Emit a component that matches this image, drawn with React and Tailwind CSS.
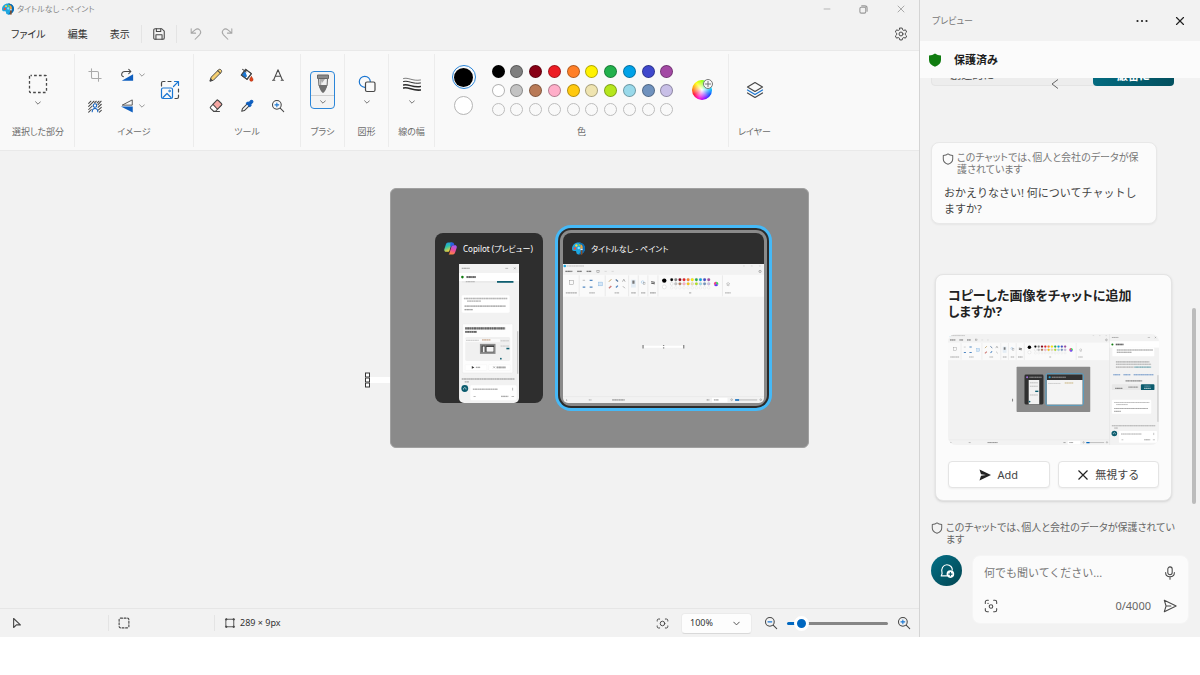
import { useState } from "react";
import { X, Minus } from "lucide-react";

const PALETTE = [
  ["bg-[#000000]", "#000000"],
  ["bg-[#7f7f7f]", "#7f7f7f"],
  ["bg-[#880015]", "#880015"],
  ["bg-[#ed1c24]", "#ed1c24"],
  ["bg-[#ff7f27]", "#ff7f27"],
  ["bg-[#fff200]", "#fff200"],
  ["bg-[#22b14c]", "#22b14c"],
  ["bg-[#00a2e8]", "#00a2e8"],
  ["bg-[#3f48cc]", "#3f48cc"],
  ["bg-[#a349a4]", "#a349a4"],
  ["bg-[#ffffff]", "#ffffff"],
  ["bg-[#c3c3c3]", "#c3c3c3"],
  ["bg-[#b97a57]", "#b97a57"],
  ["bg-[#ffaec9]", "#ffaec9"],
  ["bg-[#ffc90e]", "#ffc90e"],
  ["bg-[#efe4b0]", "#efe4b0"],
  ["bg-[#b5e61d]", "#b5e61d"],
  ["bg-[#99d9ea]", "#99d9ea"],
  ["bg-[#7092be]", "#7092be"],
  ["bg-[#c8bfe7]", "#c8bfe7"],
];
const EMPTY_SLOTS = Array.from({ length: 10 }, (_, i) => i);

/* ---------- icons ---------- */

function Icon({ size = "size-[14px]", box = "0 0 16 16", children }) {
  return (
    <svg
      viewBox={box}
      className={`${size} shrink-0`}
      fill="none"
      stroke="#484848"
      strokeWidth="1.2"
      strokeLinecap="round"
      strokeLinejoin="round"
      aria-hidden="true"
    >
      {children}
    </svg>
  );
}

function Chevron({ color = "#777" }) {
  return (
    <Icon size="size-[6px]" box="0 0 6 6">
      <path d="M.6 1.8 3 4.2 5.4 1.8" stroke={color} strokeWidth="1" />
    </Icon>
  );
}

function PaintLogo({ size = "size-3" }) {
  return (
    <svg viewBox="0 0 24 24" className={`${size} shrink-0`} aria-hidden="true">
      <path
        d="M12 1C5 1 0 6 0 12.500c0 3 2 4.500 4.500 4 2-.4 3.500.2 3.500 2.500 0 2.600 1.500 4 4 4 7 0 12-5 12-11.500C24 5.500 19 1 12 1Z"
        fill="#1ea7e0"
      />
      <path d="M12 1c7 0 12 4.500 12 10.500C24 18 19 23 12 23c6-5 8-14 0-22Z" fill="#0a6bb5" />
      <circle cx="5.500" cy="12" r="2.300" fill="#f04c3e" />
      <circle cx="8" cy="6.500" r="2.200" fill="#ffd23e" />
      <circle cx="14" cy="5.500" r="2" fill="#7bd34b" />
      <circle cx="12.500" cy="11" r="2.300" fill="#8be3ff" />
      <path d="M16.500 4.500c2.500 1 3.700 4 3.200 8h-4c-.6-3-.4-6 .8-8Z" fill="#f2a33c" />
      <path d="M15.700 12.500h4v2.500h-4z" fill="#e8e8e8" />
      <path d="M16 15h3.400l-.5 8.500h-2.300z" fill="#8a4a20" />
    </svg>
  );
}

function CopilotLogo() {
  return (
    <svg viewBox="0 0 24 24" className="size-[13px] shrink-0" aria-hidden="true">
      <defs>
        <linearGradient id="cpA" x1="0" y1="0" x2="0.4" y2="1">
          <stop offset="0" stopColor="#1c8df0" />
          <stop offset="0.5" stopColor="#2fc4a8" />
          <stop offset="1" stopColor="#f4d13a" />
        </linearGradient>
        <linearGradient id="cpB" x1="0.6" y1="0" x2="0.3" y2="1">
          <stop offset="0" stopColor="#a25bf5" />
          <stop offset="0.5" stopColor="#ea4c9c" />
          <stop offset="1" stopColor="#ff8a3c" />
        </linearGradient>
      </defs>
      <path
        d="M15.500 1H7.500C5 1 4 3 3.300 5L.7 13c-.8 3 .3 5 3.200 5h3.100c2 0 2.800-1 3.300-2.800l3-9.700C13.800 3.500 14 1.500 15.500 1Z"
        fill="url(#cpA)"
      />
      <path
        d="M8.500 23h8c2.500 0 3.500-2 4.200-4l2.600-8c.8-3-.3-5-3.200-5H17c-2 0-2.800 1-3.300 2.800l-3 9.700c-.5 2-.7 4-2.200 4.500Z"
        fill="url(#cpB)"
      />
      <path d="M12 1h3.500c2 0 2.700 1.300 3.100 2.800L19.200 6H17c-2 0-2.800 1-3.300 2.800L11.500 8Z" fill="#2b5fe0" />
    </svg>
  );
}

function SaveIcon() {
  return (
    <Icon>
      <path d="M2 3.500C2 2.700 2.700 2 3.500 2h7.700L14 4.800v7.700c0 .8-.7 1.500-1.500 1.500h-9c-.8 0-1.500-.7-1.500-1.500Z" />
      <path d="M5 2v3.200h5V2M4.500 14V8.800h7V14" />
    </Icon>
  );
}

function UndoIcon() {
  return (
    <Icon>
      <path d="M2.500 2v5h5M2.800 6.700 7 3.200c4-3 8.300 1.800 5.300 5.400L7 14" stroke="#a6a6a6" />
    </Icon>
  );
}

function RedoIcon() {
  return (
    <Icon>
      <path d="M13.500 2v5h-5M13.200 6.700 9 3.200C5 .2.700 5 3.700 8.600L9 14" stroke="#a6a6a6" />
    </Icon>
  );
}

function GearIcon() {
  return (
    <Icon box="0 0 20 20">
      <path
        d="M8.300 1.500h3.400l.6 2.500 1.600.9 2.500-.8 1.700 3-1.900 1.800v2.200l1.900 1.800-1.700 3-2.500-.8-1.600.9-.6 2.500H8.300L7.700 16l-1.600-.9-2.500.8-1.700-3 1.900-1.800V8.900L1.900 7.100l1.700-3 2.500.8L7.700 4Z"
        strokeWidth="1.400"
      />
      <circle cx="10" cy="10" r="2.800" strokeWidth="1.400" />
    </Icon>
  );
}

function CropIcon() {
  return (
    <Icon>
      <path d="M4 1v9.500c0 .8.700 1.500 1.500 1.500H15M1 4h9.500c.8 0 1.500.7 1.500 1.500V15" stroke="#aaa" />
    </Icon>
  );
}

function RotateIcon() {
  return (
    <Icon>
      <path d="M10 1.500 12.500 4 10 6.500M12.300 4H5.500C1.200 4 .8 9.500 4 10" />
      <path d="M15 7v7.500H2Z" fill="#0f5fbf" stroke="none" />
    </Icon>
  );
}

function FlipIcon() {
  return (
    <Icon>
      <path d="M14 1.500v5.500H3Z" strokeWidth="1" />
      <path d="M14.600 8.500v7L1 8.500Z" fill="#0f5fbf" stroke="none" />
    </Icon>
  );
}

function BackgroundIcon() {
  return (
    <Icon>
      <path
        d="M.8 5 3.300 2.500M.8 8.500l6-6M.8 12l4-4M.8 15l3-3M7.500 4.500l2-2M10.500 4.500l2-2M11.500 6.500l3.500-4M11.500 9.500 15.200 6M12 12.500l3.200-3M13 15l2.200-2"
        strokeWidth="1.200"
      />
      <circle cx="8" cy="7.500" r="2" stroke="#0f5fbf" fill="#f9f9f9" />
      <path d="M4.800 14.500c0-5 6.400-5 6.400 0" stroke="#0f5fbf" fill="#f9f9f9" />
    </Icon>
  );
}

function ResizeIcon() {
  return (
    <Icon size="size-5" box="0 0 20 20">
      <path d="M1.500 6V3c0-.8.700-1.500 1.500-1.500h2M8 1.500h3M18.500 9v3M18.500 15v2c0 .8-.7 1.500-1.500 1.500h-2" />
      <path d="M13.500 6.500 18.300 1.700M14.500 1.500h4v4" stroke="#1a76d2" />
      <rect x="1.500" y="8" width="11" height="10.500" rx="1.500" stroke="#1a76d2" />
      <path d="m3 17.500 4-4 4 4" stroke="#1a76d2" />
      <circle cx="9.500" cy="11" r=".8" stroke="#1a76d2" strokeWidth="1" />
    </Icon>
  );
}

function SelectIcon() {
  return (
    <Icon size="size-5" box="0 0 20 20">
      <rect x="1.500" y="1.500" width="17" height="17" rx="1" strokeDasharray="2.700 2.166" strokeDashoffset="1.300" strokeLinecap="butt" strokeWidth="1.300" />
    </Icon>
  );
}

function PencilIcon() {
  return (
    <Icon>
      <path d="m1.300 14.700 1-4L11 2c1.800-1.600 4.500 1 3 2.900L5.300 13.700Z" fill="#f7d070" strokeWidth="1.100" />
      <path d="m10 3 3 3" />
      <path d="m1.300 14.700.6-2.200 1.600 1.600Z" fill="#333" />
    </Icon>
  );
}

function BucketIcon() {
  return (
    <Icon>
      <path d="m6.500 1.500 6.500 5-5 6.500-6.500-5Z" fill="#fff" />
      <path d="m3.500 5.200 2-2.500L8 9.500l-2 2L1.500 8Z" fill="#1a76d2" stroke="none" />
      <path d="m6.500 1.500 6.500 5-5 6.500-6.500-5ZM3 1.500l4 3" />
      <path d="M13 9.800c1 1.400 1.900 2.300 1.900 3.500a1.900 1.900 0 0 1-3.800 0c0-1.200.9-2.100 1.900-3.500Z" fill="#e0431b" stroke="#a83010" strokeWidth=".6" />
    </Icon>
  );
}

function TextIcon() {
  return (
    <Icon>
      <path d="M3 13.800 8 2l5 11.800M4.900 9.500h6.200M1.800 14h2.600M11.600 14h2.600" />
    </Icon>
  );
}

function EraserIcon() {
  return (
    <Icon>
      <path d="m1.800 9 6.900-7.300c.5-.5 1.200-.5 1.700 0l3.800 3.500c.5.500.5 1.200 0 1.700L7.500 14H5.300L1.800 10.700c-.5-.5-.5-1.200 0-1.700Z" fill="#fff" />
      <path d="m4.500 6.200 5.200 5.500 4.500-4.800c.5-.5.500-1.200 0-1.700l-3.800-3.500c-.5-.5-1.200-.5-1.700 0Z" fill="#f7a8a4" />
      <path d="M5.300 14.300H12" />
    </Icon>
  );
}

function DropperIcon() {
  return (
    <Icon>
      <path d="m2 14 .8-3 5.700-5.700 2.200 2.200L5 13.200Z" />
      <path d="M9 3.500 10.500 4 12 2c1.500-1.500 3.700.5 2.200 2.200L12.200 6l.5 1.300-1.500 1.500-4-4Z" fill="#0f5fbf" stroke="#0f5fbf" />
    </Icon>
  );
}

function ZoomIcon({ plus = true }) {
  return (
    <Icon>
      <circle cx="6.700" cy="6.700" r="5" />
      <path d="m10.500 10.500 4 4" />
      <path d={plus ? "M4.500 6.700h4.400M6.700 4.500v4.400" : "M4.500 6.700h4.400"} stroke="#1a76d2" />
    </Icon>
  );
}

function BrushIcon() {
  return (
    <svg viewBox="0 0 14 20" className="h-5 w-[14px]" aria-hidden="true">
      <path d="M1.500 1h11v3.500h-11z" fill="#8a8a8a" stroke="#666" />
      <path d="M2.500 4.500h9l-.4 7-1.800 3H4.700l-1.800-3Z" fill="#eee" stroke="#666" />
      <path d="M3.500 5h2l-.3 6h-1.500zM5 5h4l-3 4z" fill="#aaa" />
      <path d="M3 11h8c0 3-2 7-4 8-2-1-4-5-4-8Z" fill="#6e6e6e" />
    </svg>
  );
}

function ShapesIcon() {
  return (
    <Icon size="size-[18px]" box="0 0 18 18">
      <circle cx="6.800" cy="6.800" r="5.500" stroke="#1a76d2" />
      <rect x="7.500" y="7" width="9.500" height="9.500" rx="1.500" fill="#fafafa" />
    </Icon>
  );
}

function LineWidthIcon() {
  return (
    <Icon size="size-[18px]" box="0 0 18 18">
      <g stroke="#2b2b2b">
        <path d="M.5 3.500c5-1.500 9 3 17 1.500" strokeWidth=".6" />
        <path d="M.5 6.500c5-1.500 9 3 17 1.500" strokeWidth="1" />
        <path d="M.5 10c5-1.500 9 3 17 1.500" strokeWidth="1.400" />
        <path d="M.5 13c5-1.500 9 3 17 2" strokeWidth="1.700" />
      </g>
    </Icon>
  );
}

function LayersIcon() {
  return (
    <Icon size="size-[18px]" box="0 0 18 18">
      <path d="M9 1.500 16.500 6 9 10.500 1.500 6Z" />
      <path d="M1.500 9 9 13.500 16.500 9" stroke="#1a76d2" />
      <path d="M1.500 12 9 16.500 16.500 12" />
    </Icon>
  );
}

function Shield({ filled }) {
  return filled ? (
    <svg viewBox="0 0 14 14" className="size-[14px] shrink-0" aria-hidden="true">
      <path d="M7 .5c1.800 1.300 3.600 1.800 6 2V7c0 3.200-2.200 5.500-6 6.700C3.200 12.500 1 10.200 1 7V2.500c2.400-.2 4.200-.7 6-2Z" fill="#107c10" />
    </svg>
  ) : (
    <Icon size="size-3" box="0 0 14 14">
      <path d="M7 1c1.600 1.200 3.300 1.700 5.500 2v4c0 3-2 5-5.500 6.200C3.500 12 1.500 10 1.500 7V3C3.700 2.700 5.400 2.200 7 1Z" stroke="#666" />
    </Icon>
  );
}

/* ---------- window thumbnails, drawn in screen units ---------- */

function Scrawl({ x, y, w, color = "#888", weight = 6 }) {
  return (
    <g stroke={color} strokeWidth={weight}>
      <path d={`M${x} ${y}h${w}`} opacity="0.35" />
      <path d={`M${x} ${y}h${w}`} strokeDasharray="7 3 10 3 5 3" opacity="0.4" />
    </g>
  );
}

function PaintScene() {
  return (
    <g>
      <rect width="919" height="637" fill="#f2f2f2" />
      <rect y="50" width="919" height="100" fill="#fafafa" />
      <circle cx="8" cy="9" r="6" fill="#1ea7e0" />
      <Scrawl x={17} y={9} w={79} color="#aaa" weight={5} />
      <Scrawl x={11} y={34} w={32} color="#333" />
      <Scrawl x={65} y={34} w={21} color="#333" />
      <Scrawl x={108} y={34} w={22} color="#333" />
      <rect x="155" y="29" width="10" height="10" fill="none" stroke="#777" strokeWidth="2" />
      <path d="M190 34h10M222 34h10M823 9h8M859 9h8M896 9h8" stroke="#ccc" strokeWidth="3" />
      <circle cx="901" cy="34" r="5" fill="none" stroke="#888" strokeWidth="3" />
      <path d="M74 52v96M193 52v96M300 52v96M344 52v96M388 52v96M434 52v96M729 52v96" stroke="#e2e2e2" strokeWidth="3" />
      <rect x="30" y="76" width="17" height="17" fill="none" stroke="#888" strokeWidth="2" />
      <path d="M90 75h11" stroke="#ccc" strokeWidth="5" />
      <path d="M122 75h13M90 106h12M122 106h13M242 108l9-9" stroke="#5087c2" strokeWidth="6" />
      <rect x="163" y="83" width="17" height="17" fill="#d5e6f6" stroke="#7fb2e0" strokeWidth="2" />
      <path d="M210 81l11-11" stroke="#b3904a" strokeWidth="4" />
      <path d="M241 71l11 9" stroke="#54759c" strokeWidth="5" />
      <path d="M272 81l6-11 6 11M274 102l9 9" stroke="#888" strokeWidth="3" fill="none" />
      <path d="M210 111l11-10" stroke="#cf7d7a" strokeWidth="7" />
      <rect x="311" y="72" width="22" height="36" fill="#e4edf5" />
      <path d="M317 76h10v14h-10z" fill="#777" />
      <circle cx="364" cy="83" r="6" fill="none" stroke="#7fb2e0" strokeWidth="2" />
      <rect x="367" y="85" width="8" height="8" fill="none" stroke="#999" strokeWidth="2" />
      <path d="M403 81l17 3M403 88l17 3" stroke="#444" strokeWidth="4" />
      <Scrawl x={13} y={132} w={50} color="#888" />
      <Scrawl x={120} y={132} w={26} color="#999" />
      <Scrawl x={236} y={132} w={21} color="#999" />
      <Scrawl x={312} y={132} w={21} color="#888" />
      <Scrawl x={357} y={132} w={19} color="#888" />
      <Scrawl x={398} y={132} w={26} color="#777" />
      <Scrawl x={577} y={132} w={10} color="#888" />
      <Scrawl x={741} y={132} w={26} color="#999" />
      <circle cx="463" cy="76" r="10" fill="#000" />
      <circle cx="463" cy="105" r="9" fill="#fff" stroke="#ccc" strokeWidth="2" />
      {PALETTE.map(([, hex], i) => (
        <circle key={hex} cx={497 + (i % 10) * 18.800} cy={i < 10 ? 72 : 91} r="6.500" fill={hex} stroke="#999" />
      ))}
      {EMPTY_SLOTS.map((i) => (
        <circle key={i} cx={497 + i * 18.800} cy="109" r="6" fill="#fafafa" stroke="#ccc" />
      ))}
      <path d="M700 81a10 10 0 0 1 9 15l-9-5Z" fill="#38d65a" />
      <path d="M709 96a10 10 0 0 1-18 0l9-5Z" fill="#6a3df0" />
      <path d="M691 96a10 10 0 0 1 9-15v10Z" fill="#f0438a" />
      <path d="M748 90l7-5 7 5-7 5ZM748 96l7 4 7-4" fill="none" stroke="#888" strokeWidth="2" />
      <path d="M0 608h919" stroke="#e2e2e2" strokeWidth="2" />
      <path d="M14 619l7 5-7 4Z" fill="#aaa" />
      <Scrawl x={118} y={623} w={12} color="#999" />
      <Scrawl x={225} y={623} w={57} color="#666" />
      <rect x="681" y="613" width="71" height="21" fill="#fff" />
      <Scrawl x={657} y={623} w={12} color="#777" />
      <Scrawl x={690} y={623} w={22} color="#777" />
      <circle cx="771" cy="622" r="4" fill="none" stroke="#777" strokeWidth="2" />
      <circle cx="904" cy="622" r="4" fill="none" stroke="#777" strokeWidth="2" />
      <path d="M787 623h101" stroke="#aaa" strokeWidth="4" />
      <path d="M787 623h18" stroke="#0067c0" strokeWidth="7" />
    </g>
  );
}

function CopilotFrame({ children }) {
  return (
    <g>
      <rect x="919" width="281" height="637" fill="#f2f2f2" />
      <path d="M919 0v637" stroke="#ddd" strokeWidth="3" />
      <Scrawl x={932} y={20} w={37} color="#888" />
      <path d="M1136 20h13M1176 16l8 8M1184 16l-8 8" stroke="#999" strokeWidth="3" />
      <rect x="920" y="41" width="280" height="37" fill="#fff" />
      <circle cx="935" cy="60" r="6" fill="#107c10" />
      <Scrawl x={954} y={60} w={44} color="#000" weight={9} />
      {children}
      <Scrawl x={932} y={527} w={248} color="#888" />
      <Scrawl x={946} y={540} w={19} color="#888" />
      <circle cx="946" cy="571" r="16" fill="#0b5c6e" />
      <path d="M940 575c0-12 12-12 12 0" fill="none" stroke="#fff" strokeWidth="3" />
      <rect x="972" y="556" width="217" height="68" rx="6" fill="#fff" />
      <Scrawl x={984} y={574} w={117} color="#888" />
      <path d="M1170 567v13M987 607h10M1165 607h12" stroke="#bbb" strokeWidth="5" />
      <Scrawl x={1116} y={607} w={34} color="#777" />
    </g>
  );
}

function PaintThumb() {
  return (
    <svg viewBox="0 0 919 637" preserveAspectRatio="none" className="h-[139px] w-full rounded-b-[5px]" role="img" aria-label="ペイント">
      <PaintScene />
      <path d="M370 379h180" stroke="#fff" strokeWidth="9" />
      <path d="M366 371v16M460 371v5M460 382v5M552 371v16" stroke="#888" strokeWidth="6" />
    </svg>
  );
}

function CopilotThumb() {
  return (
    <svg viewBox="919 0 281 637" preserveAspectRatio="none" className="mx-auto h-[139px] w-[60px] rounded-b-[5px]" role="img" aria-label="Copilot">
      <CopilotFrame>
        <rect x="932" y="78" width="242" height="8" fill="#eaeaea" />
        <rect x="1097" y="78" width="77" height="8" fill="#0b5c6e" />
        <Scrawl x={951} y={81} w={43} color="#888" weight={4} />
        <rect x="932" y="143" width="224" height="80" rx="6" fill="#fff" />
        <Scrawl x={942} y={158} w={203} color="#888" />
        <Scrawl x={957} y={170} w={65} color="#888" />
        <Scrawl x={945} y={193} w={192} color="#666" />
        <Scrawl x={945} y={209} w={38} color="#666" />
        <rect x="935" y="274" width="236" height="226" rx="6" fill="#fdfdfd" stroke="#e6e6e6" strokeWidth="2" />
        <Scrawl x={948} y={295} w={187} color="#000" weight={10} />
        <Scrawl x={948} y={311} w={55} color="#000" weight={9} />
        <rect x="948" y="334" width="211" height="111" rx="8" fill="#f0f0f0" />
        <rect x="948" y="344" width="163" height="14" fill="#fafafa" />
        <Scrawl x={1027} y={348} w={40} color="#b5835e" />
        <Scrawl x={952} y={350} w={60} color="#bbb" />
        <rect x="1017" y="366" width="73" height="46" fill="#8a8a8a" />
        <rect x="1025" y="374" width="18" height="30" fill="#333" />
        <rect x="1030" y="378" width="9" height="26" fill="#eee" />
        <rect x="1046" y="374" width="37" height="30" fill="#333" />
        <rect x="1048" y="380" width="33" height="22" fill="#f5f5f5" />
        <Scrawl x={1114} y={352} w={40} color="#aaa" weight={4} />
        <Scrawl x={1114} y={376} w={40} color="#aaa" weight={4} />
        <rect x="1141" y="384" width="14" height="7" fill="#0b5c6e" />
        <circle cx="1115" cy="434" r="4" fill="#0b5c6e" />
        <rect x="948" y="461" width="101" height="27" rx="4" fill="#fff" stroke="#e6e6e6" />
        <rect x="1058" y="461" width="101" height="27" rx="4" fill="#fff" stroke="#e6e6e6" />
        <path d="M979 468l12 6-12 6Z" fill="#333" />
        <Scrawl x={998} y={474} w={20} color="#777" />
        <path d="M1079 469l9 9M1088 469l-9 9" stroke="#666" strokeWidth="2" />
        <Scrawl x={1095} y={474} w={43} color="#666" weight={8} />
        <path d="M1194 308v195" stroke="#bbb" strokeWidth="5" />
      </CopilotFrame>
    </svg>
  );
}

function ScreenThumb() {
  return (
    <svg viewBox="0 0 1200 637" preserveAspectRatio="none" className="mt-[15px] block h-[111px] w-full rounded-lg" role="img" aria-label="コピーした画像">
      <PaintScene />
      <CopilotFrame>
        <path d="M935 78h238v50h-238z" fill="#fff" />
        <Scrawl x={960} y={92} w={205} color="#666" />
        <Scrawl x={960} y={105} w={85} color="#666" />
        <Scrawl x={955} y={160} w={190} color="#888" />
        <Scrawl x={955} y={174} w={200} color="#888" />
        <Scrawl x={955} y={190} w={100} color="#888" />
        <Scrawl x={1060} y={190} w={95} color="#1b7483" />
        <Scrawl x={940} y={234} w={40} color="#2a66b4" />
        <Scrawl x={998} y={234} w={40} color="#2a66b4" />
        <Scrawl x={1056} y={234} w={112} color="#2a66b4" />
        <Scrawl x={1010} y={269} w={94} color="#444" />
        <rect x="932" y="288" width="242" height="34" rx="5" fill="#e8e8e8" />
        <rect x="1097" y="288" width="77" height="34" rx="5" fill="#0b5c6e" />
        <Scrawl x={951} y={312} w={42} color="#444" />
        <Scrawl x={1026} y={305} w={55} color="#666" />
        <Scrawl x={1117} y={299} w={34} color="#cde" weight={4} />
        <Scrawl x={1115} y={312} w={38} color="#fff" />
        <rect x="932" y="378" width="224" height="80" rx="6" fill="#fff" />
        <Scrawl x={945} y={393} w={200} color="#999" />
        <Scrawl x={957} y={405} w={65} color="#999" />
        <Scrawl x={945} y={428} w={192} color="#777" />
        <Scrawl x={945} y={444} w={38} color="#777" />
        <path d="M1194 236v268" stroke="#bbb" strokeWidth="5" />
      </CopilotFrame>
      <path d="M367 371v16" stroke="#888" strokeWidth="6" />
      <rect x="390" y="188" width="419" height="260" rx="4" fill="#8a8a8a" />
      <rect x="435" y="233" width="108" height="171" rx="8" fill="#303030" />
      <rect x="459" y="264" width="60" height="139" fill="#f2f2f2" />
      <circle cx="450" cy="248" r="6" fill="#a070d8" />
      <Scrawl x={463} y={248} w={70} color="#ccc" />
      <Scrawl x={466} y={280} w={45} color="#888" weight={4} />
      <Scrawl x={466} y={300} w={45} color="#888" weight={4} />
      <Scrawl x={466} y={350} w={45} color="#888" weight={4} />
      <rect x="496" y="325" width="18" height="8" fill="#0b5c6e" />
      <circle cx="464" cy="388" r="5" fill="#0b5c6e" />
      <rect x="557" y="228" width="213" height="181" rx="10" fill="#8a8a8a" stroke="#3aa8e0" strokeWidth="4" />
      <rect x="563" y="233" width="201" height="31" fill="#303030" />
      <rect x="563" y="264" width="201" height="140" fill="#f4f4f4" />
      <circle cx="578" cy="248" r="6" fill="#1ea7e0" />
      <Scrawl x={590} y={248} w={80} color="#ccc" />
      <Scrawl x={570} y={284} w={70} color="#bbb" />
      <Scrawl x={664} y={281} w={48} color="#b99b50" />
    </svg>
  );
}

/* ---------- paint window ---------- */

function RibbonGroup({ label, width, children }) {
  return (
    <section className={`${width} flex shrink-0 flex-col items-center border-r border-[#ececec] pb-[9px]`}>
      <div className="flex flex-1 items-center justify-center">{children}</div>
      <h2 className="text-[9px] leading-3 whitespace-nowrap text-[#6c6c6c]">{label}</h2>
    </section>
  );
}

function IconButton({ label, children }) {
  return (
    <button type="button" aria-label={label} title={label} className="flex items-center justify-center">
      {children}
    </button>
  );
}

function StackButton({ label, children }) {
  return (
    <button type="button" aria-label={label} className="flex flex-col items-center gap-[6px]">
      {children}
      <Chevron />
    </button>
  );
}

function TitleBar() {
  return (
    <header className="flex h-[18px] items-center pl-[2px]">
      <PaintLogo />
      <h1 className="ml-[3px] text-[8px] leading-3 text-[#888]">タイトルなし - ペイント</h1>
      <div className="ml-auto flex text-[#aaa]">
        <button type="button" aria-label="最小化" className="flex w-[37px] items-center justify-center">
          <Minus className="size-[10px]" strokeWidth={2} />
        </button>
        <button type="button" aria-label="元に戻す" className="flex w-[37px] items-center justify-center">
          <Icon size="size-[9px]" box="0 0 10 10">
            <rect x="1" y="2.500" width="6.500" height="6.500" rx="1.500" stroke="#999" />
            <path d="M3 1h3.500C8 1 9 2 9 3.500V7" stroke="#999" />
          </Icon>
        </button>
        <button type="button" aria-label="閉じる" className="flex w-[37px] items-center justify-center">
          <X className="size-3" strokeWidth={2} />
        </button>
      </div>
    </header>
  );
}

function MenuBar() {
  return (
    <nav className="flex h-8 items-center text-[10px] leading-4 text-[#303030]">
      <button type="button" className="px-[11px]">ファイル</button>
      <button type="button" className="px-[11px]">編集</button>
      <button type="button" className="px-[11px]">表示</button>
      <div className="flex h-[18px] w-[36px] items-center justify-center border-x border-[#e4e4e4]">
        <IconButton label="保存"><SaveIcon /></IconButton>
      </div>
      <div className="ml-3 flex gap-[17px]">
        <IconButton label="元に戻す"><UndoIcon /></IconButton>
        <IconButton label="やり直し"><RedoIcon /></IconButton>
      </div>
      <div className="mr-[11px] ml-auto">
        <IconButton label="設定"><GearIcon /></IconButton>
      </div>
    </nav>
  );
}

function ColorPicker() {
  return (
    <div className="flex items-center">
      <div className="flex flex-col items-center gap-[7px]">
        <button type="button" aria-label="色 1" className="flex size-6 items-center justify-center rounded-full border border-[#2b86d9]">
          <span className="size-[19px] rounded-full bg-black" />
        </button>
        <button type="button" aria-label="色 2" className="size-[19px] rounded-full border border-[#b5b5b5] bg-white" />
      </div>
      <div className="ml-4 grid w-[182px] grid-cols-[repeat(10,13px)] justify-between gap-y-[6px]">
        {PALETTE.map(([fill, hex]) => (
          <button key={hex} type="button" aria-label={hex} className={`size-[13px] rounded-full border border-black/30 ${fill}`} />
        ))}
        {EMPTY_SLOTS.map((i) => (
          <button key={i} type="button" aria-label={`カスタム ${i + 1}`} className="size-[13px] rounded-full border border-[#bdbdbd]" />
        ))}
      </div>
      <button type="button" aria-label="色の編集" className="relative ml-[18px] size-5 rounded-full bg-[radial-gradient(circle,#fff_0%,transparent_70%),conic-gradient(#9f0,#0f6,#0cf,#04f,#80f,#f0c,#f03,#f80,#ff0,#9f0)]">
        <span className="absolute -top-px -right-px flex size-[10px] items-center justify-center rounded-full border border-[#777] bg-[#f9f9f9]">
          <svg viewBox="0 0 8 8" className="size-2" aria-hidden="true">
            <path d="M1 4h6M4 1v6" stroke="#777" />
          </svg>
        </span>
      </button>
    </div>
  );
}

function Ribbon() {
  return (
    <div className="flex border-y border-[#e9e9e9] bg-[#f9f9f9] py-[3px] pl-[2px]">
      <div className="flex h-[93px]">
        <RibbonGroup label="選択した部分" width="w-[73px]">
          <StackButton label="選択"><SelectIcon /></StackButton>
        </RibbonGroup>
        <RibbonGroup label="イメージ" width="w-[119px]">
          <div className="flex items-center gap-[15px]">
            <div className="grid grid-cols-[14px_25px] gap-x-[18px] gap-y-[17px]">
              <IconButton label="トリミング"><CropIcon /></IconButton>
              <button type="button" aria-label="回転" className="flex items-center gap-[5px]">
                <RotateIcon />
                <Chevron color="#999" />
              </button>
              <IconButton label="背景の削除"><BackgroundIcon /></IconButton>
              <button type="button" aria-label="反転" className="flex items-center gap-[5px]">
                <FlipIcon />
                <Chevron color="#999" />
              </button>
            </div>
            <IconButton label="サイズ変更"><ResizeIcon /></IconButton>
          </div>
        </RibbonGroup>
        <RibbonGroup label="ツール" width="w-[107px]">
          <div className="grid grid-cols-3 gap-[17px]">
            <IconButton label="鉛筆"><PencilIcon /></IconButton>
            <IconButton label="塗りつぶし"><BucketIcon /></IconButton>
            <IconButton label="テキスト"><TextIcon /></IconButton>
            <IconButton label="消しゴム"><EraserIcon /></IconButton>
            <IconButton label="色の選択"><DropperIcon /></IconButton>
            <IconButton label="拡大鏡"><ZoomIcon /></IconButton>
          </div>
        </RibbonGroup>
        <RibbonGroup label="ブラシ" width="w-[44px]">
          <button type="button" aria-label="ブラシ" className="flex h-[38px] w-[25px] flex-col items-center rounded-[4px] border border-[#2b86d9] bg-[#f3f3f3]">
            <span className="flex h-6 w-full items-center justify-center border-b border-[#cfcfcf]"><BrushIcon /></span>
            <span className="flex flex-1 items-center"><Chevron /></span>
          </button>
        </RibbonGroup>
        <RibbonGroup label="図形" width="w-[44px]">
          <StackButton label="図形"><ShapesIcon /></StackButton>
        </RibbonGroup>
        <RibbonGroup label="線の幅" width="w-[46px]">
          <StackButton label="線の幅"><LineWidthIcon /></StackButton>
        </RibbonGroup>
        <RibbonGroup label="色" width="w-[294px]">
          <ColorPicker />
        </RibbonGroup>
        <section className="flex w-[51px] flex-col items-center pb-[9px]">
          <div className="flex flex-1 items-center">
            <IconButton label="レイヤー"><LayersIcon /></IconButton>
          </div>
          <h2 className="text-[9px] leading-3 whitespace-nowrap text-[#6c6c6c]">レイヤー</h2>
        </section>
      </div>
    </div>
  );
}

function Canvas() {
  return (
    <main className="flex flex-1 items-center justify-center bg-[#f2f2f2]">
      <div className="relative h-[6px] w-[180px] bg-white">
        <div className="absolute top-1/2 right-full flex -translate-y-1/2 flex-col">
          <span className="size-[5px] border border-[#333] bg-white" />
          <span className="size-[5px] border border-[#333] bg-white" />
          <span className="size-[5px] border border-[#333] bg-white" />
        </div>
      </div>
    </main>
  );
}

function StatusBar() {
  const [zoom, setZoom] = useState(8);

  return (
    <footer className="flex h-[29px] items-center border-t border-[#e6e6e6] text-[9px] leading-3 text-[#333]">
      <div className="flex h-4 w-[109px] items-center border-r border-[#e4e4e4] pl-[11px]">
        <Icon size="size-3">
          <path d="M3.500 2v12l3.700-3.500h5.300Z" strokeWidth="1.500" />
        </Icon>
      </div>
      <div className="flex h-4 w-[106px] items-center border-r border-[#e4e4e4] pl-[9px]">
        <Icon size="size-3">
          <rect x="1.500" y="1.500" width="13" height="13" rx="2" strokeDasharray="2.500 2.200" strokeWidth="1.500" />
        </Icon>
      </div>
      <div className="flex items-center gap-1 pl-[9px]">
        <Icon size="size-3">
          <path d="M3 3h10v10H3Z" />
          <path d="M2 3h2M12 3h2M2 13h2M12 13h2M3 2v2M13 2v2M3 12v2M13 12v2" strokeWidth="1.600" />
        </Icon>
        289 × 9px
      </div>
      <div className="mr-2 ml-auto flex items-center">
        <IconButton label="画面に合わせる">
          <Icon size="size-[13px]">
            <circle cx="8" cy="8" r="2.800" />
            <path d="M1.500 5V4c0-.8.500-1.500 1.500-1.500h1.500M11.500 2.500H13c1 0 1.500.7 1.500 1.500v1M14.500 11v1c0 .8-.5 1.500-1.500 1.500h-1.500M4.500 13.500H3c-1 0-1.500-.7-1.500-1.500v-1" />
          </Icon>
        </IconButton>
        <div className="relative ml-3 flex items-center">
          <select aria-label="ズーム" className="h-[21px] w-[71px] appearance-none rounded-[4px] border border-[#ebebeb] border-b-[#d9d9d9] bg-[#fdfdfd] pl-2 text-[9px] leading-3">
            <option>100%</option>
          </select>
          <span className="pointer-events-none absolute right-3">
            <Icon size="size-[7px]" box="0 0 6 6">
              <path d="M.6 1.800 3 4.200 5.400 1.800" strokeWidth=".8" />
            </Icon>
          </span>
        </div>
        <div className="ml-3 flex items-center gap-[9px]">
          <IconButton label="縮小"><ZoomIcon plus={false} /></IconButton>
          <input
            type="range"
            aria-label="ズーム倍率"
            min="0"
            max="100"
            value={zoom}
            onChange={(e) => setZoom(Number(e.target.value))}
            className="h-[15px] w-[101px] appearance-none bg-transparent [&::-webkit-slider-runnable-track]:h-[3px] [&::-webkit-slider-runnable-track]:rounded-full [&::-webkit-slider-runnable-track]:bg-[linear-gradient(to_right,#0067c0_14%,#868686_14%)] [&::-webkit-slider-thumb]:-mt-[6px] [&::-webkit-slider-thumb]:size-[15px] [&::-webkit-slider-thumb]:appearance-none [&::-webkit-slider-thumb]:rounded-full [&::-webkit-slider-thumb]:border-[3px] [&::-webkit-slider-thumb]:border-white [&::-webkit-slider-thumb]:bg-[#0067c0]"
          />
          <IconButton label="拡大"><ZoomIcon /></IconButton>
        </div>
      </div>
    </footer>
  );
}

/* ---------- task switcher ---------- */

function TaskSwitcher() {
  return (
    <div className="pointer-events-none absolute inset-0 flex items-center justify-center pr-px pb-px">
      <div className="flex gap-5 rounded-md border border-[#a0a0a0] bg-[#8a8a8a] p-11 text-[8px] leading-4 text-white">
        <article className="w-[108px] rounded-lg bg-[#2e2e2e]">
          <h3 className="flex h-[31px] items-center gap-[6px] pl-[9px] whitespace-nowrap">
            <CopilotLogo />
            Copilot (プレビュー)
          </h3>
          <CopilotThumb />
        </article>
        <article className="w-[201px] rounded-lg bg-[#2e2e2e] shadow-[0_0_0_3px_#8a8a8a,0_0_0_5px_#2b2b2b,0_0_0_8px_#45b9f7]">
          <h3 className="flex h-[31px] items-center gap-[6px] pl-[9px] whitespace-nowrap">
            <PaintLogo size="size-[13px]" />
            タイトルなし - ペイント
          </h3>
          <PaintThumb />
        </article>
      </div>
    </div>
  );
}

/* ---------- copilot panel ---------- */

function ChatFeed() {
  return (
    <div className="relative flex-1 overflow-hidden pr-[26px] pl-[11px]">
      <div className="-mt-5 grid h-7 grid-cols-3 rounded-[4px] border border-[#e4e4e4] bg-[#ededed] text-[11px] leading-4">
        <button type="button" className="pt-[6px] text-[#555]">創造的に</button>
        <span />
        <button type="button" className="-mr-px -mb-px rounded-[4px] bg-linear-to-r from-[#036b80] to-[#03505f] pt-[6px] font-bold text-white">厳密に</button>
      </div>
      <svg viewBox="0 0 8 10" className="absolute top-[1px] left-[131px] h-[10px] w-2" fill="none" aria-hidden="true">
        <path d="M7 .5 1 5l6 4.500" stroke="#666" />
      </svg>

      <article className="mt-[56px] w-[226px] rounded-lg border border-[#e8e8e8] bg-[#fbfbfb] px-[10px] pt-2 pb-[6px] shadow-xs">
        <div className="flex gap-[3px] text-[10px] leading-3 text-[#777]">
          <span className="pt-[2px]"><Shield /></span>
          <p className="whitespace-nowrap">
            このチャットでは、個人と会社のデータが保
            <br />
            護されています
          </p>
        </div>
        <p className="mt-[10px] pl-[2px] text-[11px] leading-4 whitespace-nowrap text-[#444] [font-feature-settings:normal]">
          おかえりなさい! 何についてチャットし
          <br />
          ますか?
        </p>
      </article>

      <article className="mt-[50px] mr-[2px] ml-1 rounded-lg border border-[#e4e4e4] bg-[#fbfbfb] p-3 shadow-sm">
        <h3 className="text-[13px] leading-4 font-bold whitespace-nowrap text-[#222]">
          コピーした画像をチャットに追加
          <br />
          しますか?
        </h3>
        <ScreenThumb />
        <div className="mt-4 grid grid-cols-2 gap-2 text-[11px] leading-4 text-[#444] [font-feature-settings:normal]">
          <button type="button" className="flex h-[27px] items-center justify-center gap-[6px] rounded-[4px] border border-[#e4e4e4] bg-white shadow-xs">
            <svg viewBox="0 0 12 12" className="size-3" aria-hidden="true">
              <path d="M.5.500 12 6 .5 11.500 2 6.800 7 6 2 5.200Z" fill="#222" />
            </svg>
            Add
          </button>
          <button type="button" className="flex h-[27px] items-center justify-center gap-[6px] rounded-[4px] border border-[#e4e4e4] bg-white shadow-xs">
            <svg viewBox="0 0 12 12" className="size-3" aria-hidden="true">
              <path d="m1.500 1.500 9 9M10.500 1.500l-9 9" stroke="#222" strokeWidth="1.200" />
            </svg>
            無視する
          </button>
        </div>
      </article>

      <div className="absolute top-[230px] right-1 h-[196px] w-1 rounded-full bg-[#bcbcbc]" />
    </div>
  );
}

function Composer() {
  return (
    <form className="pr-[11px] pb-[13px] pl-[11px]">
      <div className="flex gap-[3px] text-[10px] leading-3 text-[#666]">
        <span className="pt-[1px]"><Shield /></span>
        <p className="whitespace-nowrap">
          このチャットでは、個人と会社のデータが保護されてい
          <br />
          ます
        </p>
      </div>
      <div className="mt-[10px] flex items-start gap-[10px]">
        <button type="button" aria-label="新しいトピック" className="flex size-[31px] shrink-0 items-center justify-center rounded-full bg-linear-to-br from-[#037087] to-[#034652]">
          <svg viewBox="0 0 18 18" className="size-4" fill="none" aria-hidden="true">
            <path d="M9 14.500H2.500l1-2.600C1.700 6 5 2 8.800 2c4 0 6.500 3 6.200 6.500" stroke="#fff" strokeWidth="1.300" strokeLinejoin="round" />
            <circle cx="12.800" cy="12.500" r="4.300" fill="#fff" />
            <path d="M12.800 10.200v4.600M10.500 12.500h4.600" stroke="#04566a" strokeWidth="1.200" />
          </svg>
        </button>
        <div className="flex h-[69px] flex-1 flex-col justify-between rounded-lg border border-[#f5f5f5] bg-[#fbfbfb] py-[9px] pr-[11px] pl-[11px] text-[11px] leading-4 text-[#666]">
          <div className="flex items-center justify-between">
            <input
              type="text"
              aria-label="メッセージ"
              placeholder="何でも聞いてください..."
              className="w-[140px] bg-transparent outline-none [font-feature-settings:normal] placeholder:text-[#777] placeholder:opacity-100"
            />
            <IconButton label="マイク">
              <Icon>
                <rect x="5.500" y="1" width="5" height="9" rx="2.500" />
                <path d="M3 7.500c0 6.500 10 6.500 10 0M8 12.500V15" />
              </Icon>
            </IconButton>
          </div>
          <div className="flex items-center">
            <IconButton label="画像を追加">
              <Icon>
                <circle cx="8" cy="8.500" r="2" />
                <path d="M1.500 5V3.500c0-1.200.8-2 2-2H5M11 1.500h1.500c1.200 0 2 .8 2 2V5M14.500 11v1.500c0 1.200-.8 2-2 2H11M5 14.500H3.500c-1.200 0-2-.8-2-2V11M4.500 5h.2" />
              </Icon>
            </IconButton>
            <span className="mr-3 ml-auto">0/4000</span>
            <button type="submit" aria-label="送信" className="flex items-center">
              <Icon>
                <path d="M1.500 1.500 15 8 1.500 14.500 3.500 8ZM3.500 8H9" />
              </Icon>
            </button>
          </div>
        </div>
      </div>
    </form>
  );
}

function CopilotPanel() {
  return (
    <aside className="flex w-[281px] shrink-0 flex-col border-l border-[#d4d4d4] bg-[#f2f2f2]">
      <header className="flex h-[41px] items-center pr-[13px] pl-3">
        <h2 className="text-[9px] leading-4 text-[#777]">プレビュー</h2>
        <div className="ml-auto flex items-center gap-6">
          <IconButton label="その他">
            <svg viewBox="0 0 14 4" className="h-1 w-[14px]" fill="#222" aria-hidden="true">
              <circle cx="2.500" cy="2" r="1.100" />
              <circle cx="7" cy="2" r="1.100" />
              <circle cx="11.500" cy="2" r="1.100" />
            </svg>
          </IconButton>
          <IconButton label="閉じる">
            <X className="size-[14px] text-[#222]" strokeWidth={2} />
          </IconButton>
        </div>
      </header>
      <div className="flex h-[37px] items-center gap-3 bg-[#fbfbfb] pl-2">
        <Shield filled />
        <strong className="text-[11px] leading-4 font-bold text-[#1c1c1c]">保護済み</strong>
      </div>
      <ChatFeed />
      <Composer />
    </aside>
  );
}

export default function App() {
  return (
    <div className="h-screen bg-white pb-[38px] font-['Noto_Sans','Noto_Sans_CJK_JP',sans-serif] [font-feature-settings:'palt']">
      <div className="relative flex h-full bg-[#f2f2f2]">
        <div className="flex min-w-0 flex-1 flex-col">
          <TitleBar />
          <MenuBar />
          <Ribbon />
          <Canvas />
          <StatusBar />
        </div>
        <CopilotPanel />
        <TaskSwitcher />
      </div>
    </div>
  );
}
